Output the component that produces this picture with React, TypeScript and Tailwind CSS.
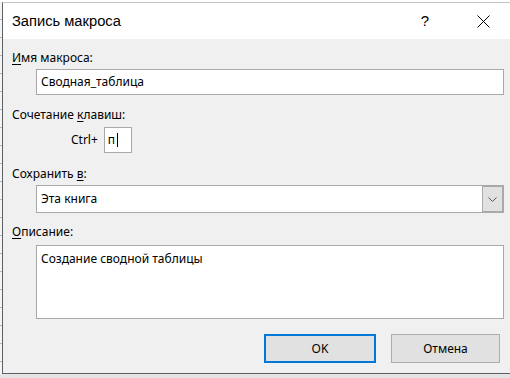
import React from 'react';

const font = "font-['Noto_Sans','Liberation_Sans',Arial,sans-serif]";

const Label: React.FC<{ children: React.ReactNode; className?: string }> = ({ children, className }) => (
    <div className={`h-4 text-[12px] leading-4 text-black ${className ?? ''}`}>{children}</div>
);

const App: React.FC = () => {
    return (
        <div className={`flex h-[378px] w-[510px] flex-col overflow-hidden bg-[#ececec] ${font}`}>
            <div className="h-[2px] bg-white" />
            <div className="flex">
                {/* excel grid peeking out on the left */}
                <div className="h-[372px] w-[2px] bg-[repeating-linear-gradient(to_bottom,#f4f4f4_0px,#f4f4f4_17px,#b8b8b8_17px,#b8b8b8_18px)]" />
                <div className="flex h-[372px] w-[508px] flex-col border-b border-l border-t border-b-[#5d6167] border-l-[#5d6167] border-t-[#c4c4c4]">
                    {/* title bar */}
                    <div className="flex h-[36px] shrink-0 items-center bg-white pl-[9px] pr-[20px]">
                        <span className="font-['Liberation_Sans',Arial,sans-serif] text-[14.7px] text-black">Запись макроса</span>
                        <span className="ml-auto font-['Liberation_Sans',Arial,sans-serif] text-[15px] font-light text-black">?</span>
                        <svg className="ml-[48px]" width="13" height="13" viewBox="0 0 13 13">
                            <path d="M0.5 0.5 L12.5 12.5 M12.5 0.5 L0.5 12.5" stroke="#000" strokeWidth="1" fill="none" />
                        </svg>
                    </div>

                    {/* body */}
                    <div className="flex flex-1 flex-col bg-[#f0f0f0] pl-[9px] pt-[11px]">
                        <Label>
                            <span className="underline underline-offset-2">И</span>мя макроса:
                        </Label>
                        <div className="ml-[24px] mt-[3px] flex h-[26px] w-[468px] items-center border border-[#a9a9a9] bg-white pl-[4px] text-[12px] text-black">
                            Сводная_таблица
                        </div>

                        <Label className="mt-[12px]">
                            Сочетание <span className="underline underline-offset-2">к</span>лавиш:
                        </Label>
                        <div className="mt-[4px] flex h-[26px] items-center">
                            <span className="ml-[59px] text-[12px] text-black">Ctrl+</span>
                            <div className="ml-[6px] flex h-[26px] w-[28px] items-center border border-[#a9a9a9] bg-white pl-[3px] text-[12px] text-black">
                                п<span className="ml-[2px] h-[14px] w-px bg-black" />
                            </div>
                        </div>

                        <Label className="mt-[13px]">
                            Сохранить <span className="underline underline-offset-2">в</span>:
                        </Label>
                        <div className="ml-[24px] mt-[3px] flex h-[28px] w-[468px] border border-[#a9a9a9] bg-white">
                            <div className="flex flex-1 items-center pl-[4px] text-[12px] text-black">Эта книга</div>
                            <div className="flex h-full w-[21px] items-center justify-center border border-[#a9a9a9] bg-[#e1e1e1]">
                                <svg width="9" height="5" viewBox="0 0 9 5">
                                    <path d="M0.5 0.5 L4.5 4.5 L8.5 0.5" stroke="#555" strokeWidth="1" fill="none" />
                                </svg>
                            </div>
                        </div>

                        <Label className="mt-[11px]">
                            <span className="underline underline-offset-2">О</span>писание:
                        </Label>
                        <div className="ml-[24px] mt-[5px] h-[74px] w-[468px] border border-[#a9a9a9] bg-white pl-[4px] pt-[5px] text-[12px] leading-4 text-black">
                            Создание сводной таблицы
                        </div>

                        <div className="ml-[252px] mt-[15px] flex gap-[15px]">
                            <button className="flex h-[29px] w-[112px] items-center justify-center border-2 border-[#0078d7] bg-[#e1e1e1] text-[12px] text-black">
                                OK
                            </button>
                            <button className="flex h-[29px] w-[109px] items-center justify-center border border-[#adadad] bg-[#e1e1e1] text-[12px] text-black">
                                Отмена
                            </button>
                        </div>
                    </div>
                </div>
            </div>
            <div className="flex-1 bg-[#e4e4e4]" />
        </div>
    );
};

export default App;
